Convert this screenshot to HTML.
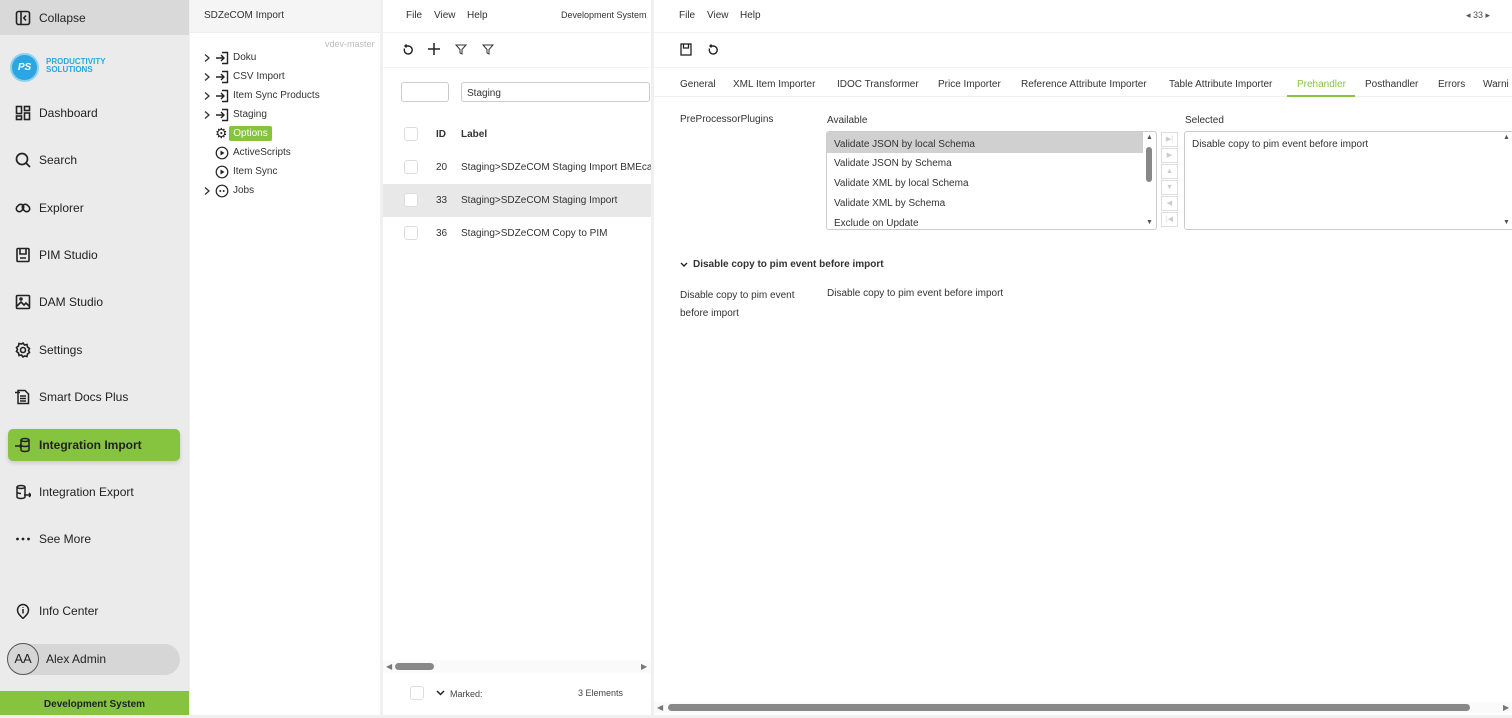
<!DOCTYPE html>
<html><head><meta charset="utf-8"><style>
*{box-sizing:border-box;margin:0;padding:0}
body{width:1512px;height:715px;overflow:hidden;background:#f0f0f0;font-family:"Liberation Sans",sans-serif;color:#333;position:relative}
.a{position:absolute;white-space:nowrap}
.sb{left:0;top:0;width:189px;height:715px;background:#ebebeb}
.nav{position:absolute;left:15px;font-size:12px;color:#222;display:flex;align-items:center;gap:8px}
.nav svg{width:16px;height:16px}
.t{font-size:10px;color:#333}
</style></head><body>
<svg width="0" height="0" style="position:absolute"><defs>
<symbol id="chev" viewBox="0 0 8 10"><path d="M2 1.5 6 5 2 8.5" fill="none" stroke="#333" stroke-width="1.3"/></symbol>
<symbol id="imp" viewBox="0 0 14 14"><path d="M1 7h8M6 4l3 3-3 3M7 1.5h5.5v11H7" fill="none" stroke="#222" stroke-width="1.4"/></symbol>
<symbol id="play" viewBox="0 0 14 14"><circle cx="7" cy="7" r="5.8" fill="none" stroke="#222" stroke-width="1.2"/><path d="M5.5 4.5v5l4-2.5z" fill="#222"/></symbol>
<symbol id="jobs" viewBox="0 0 14 14"><circle cx="7" cy="7" r="5.8" fill="none" stroke="#222" stroke-width="1.2"/><circle cx="5.3" cy="7" r="1" fill="#222"/><circle cx="8.7" cy="7" r="1" fill="#222"/></symbol>
</defs></svg>
<!-- sidebar -->
<div class="a sb"></div>
<div class="a" style="left:0;top:0;width:189px;height:35px;background:#d9d9d9"></div>
<div class="nav" style="top:10px"><svg viewBox="0 0 16 16" fill="none" stroke="#222" stroke-width="1.6"><rect x="1.5" y="1.5" width="13" height="13" rx="2"/><path d="M6 2v12M11 5.5 8.8 8 11 10.5"/></svg>Collapse</div>
<div class="a" style="left:10px;top:53px;width:29px;height:29px;border-radius:50%;background:#2ba6e0;border:2px solid #8fd0f0;color:#fff;font-size:10px;font-style:italic;font-weight:bold;text-align:center;line-height:25px">PS</div>
<div class="a" style="left:46px;top:58px;font-size:8px;font-weight:bold;color:#2ba6e0;line-height:8px">PRODUCTIVITY<br>SOLUTIONS</div>
<div class="nav" style="top:105px"><svg viewBox="0 0 16 16" fill="none" stroke="#222" stroke-width="1.6"><rect x="1.5" y="1.5" width="5" height="7"/><rect x="9.5" y="1.5" width="5" height="4"/><rect x="1.5" y="11" width="5" height="3.5"/><rect x="9.5" y="8" width="5" height="6.5"/></svg>Dashboard</div>
<div class="nav" style="top:152px"><svg viewBox="0 0 16 16" fill="none" stroke="#222" stroke-width="1.7"><circle cx="7" cy="7" r="5.5"/><path d="M11 11l4 4"/></svg>Search</div>
<div class="nav" style="top:200px"><svg viewBox="0 0 16 16" fill="none" stroke="#222" stroke-width="1.6"><rect x="1" y="5" width="8" height="6" rx="3" transform="rotate(-45 5 8)"/><rect x="7" y="5" width="8" height="6" rx="3" transform="rotate(45 11 8)"/></svg>Explorer</div>
<div class="nav" style="top:247px"><svg viewBox="0 0 16 16" fill="none" stroke="#222" stroke-width="1.6"><rect x="2" y="1.5" width="12" height="13" rx="1"/><path d="M5 2v5h6V2M5 11h6"/></svg>PIM Studio</div>
<div class="nav" style="top:294px"><svg viewBox="0 0 16 16" fill="none" stroke="#222" stroke-width="1.6"><rect x="1.5" y="1.5" width="13" height="13" rx="1"/><path d="M2 12l4-4 3 3 2-2 3 3"/><circle cx="6" cy="5" r="1"/></svg>DAM Studio</div>
<div class="nav" style="top:342px"><svg viewBox="0 0 16 16" fill="none" stroke="#222" stroke-width="1.6"><circle cx="8" cy="8" r="2.5"/><path d="M8 1l1.5 2 2.5-.5.5 2.5 2 1.5-1 2 1 2-2 1.5-.5 2.5-2.5-.5L8 15l-1.5-2-2.5.5-.5-2.5-2-1.5 1-2-1-2 2-1.5.5-2.5 2.5.5z"/></svg>Settings</div>
<div class="nav" style="top:389px"><svg viewBox="0 0 16 16" fill="none" stroke="#222" stroke-width="1.5"><path d="M3 1.5h7l3.5 3.5v9.5H3zM5 7h6M5 9.5h6M5 12h6M0 3.5h5"/></svg>Smart Docs Plus</div>
<div class="a" style="left:8px;top:429px;width:172px;height:32px;background:#86c440;border-radius:5px;box-shadow:0 2px 4px rgba(0,0,0,.15)"></div>
<div class="nav" style="top:437px;font-weight:bold"><svg viewBox="0 0 16 16" fill="none" stroke="#222" stroke-width="1.5"><ellipse cx="10" cy="3" rx="4" ry="1.5"/><path d="M6 3v10c0 .8 1.8 1.5 4 1.5s4-.7 4-1.5V3M6 8c0 .8 1.8 1.5 4 1.5s4-.7 4-1.5M0 9h7M5 7l2 2-2 2"/></svg>Integration Import</div>
<div class="nav" style="top:484px"><svg viewBox="0 0 16 16" fill="none" stroke="#222" stroke-width="1.5"><ellipse cx="6" cy="3" rx="4" ry="1.5"/><path d="M2 3v10c0 .8 1.8 1.5 4 1.5s4-.7 4-1.5V3M2 8c0 .8 1.8 1.5 4 1.5M9 11h7M14 9l2 2-2 2"/></svg>Integration Export</div>
<div class="nav" style="top:531px"><svg viewBox="0 0 16 16" fill="#222"><circle cx="2.5" cy="8" r="1.4"/><circle cx="8" cy="8" r="1.4"/><circle cx="13.5" cy="8" r="1.4"/></svg>See More</div>
<div class="nav" style="top:603px"><svg viewBox="0 0 16 16" fill="none" stroke="#222" stroke-width="1.5"><path d="M8 15.5C5 12.5 2.5 10.5 2.5 7a5.5 5.5 0 0 1 11 0c0 3.5-2.5 5.5-5.5 8.5z"/><path d="M8 6v4.5M8 4v.8"/></svg>Info Center</div>
<div class="a" style="left:7px;top:644px;width:173px;height:31px;background:#d6d6d6;border-radius:16px"></div>
<div class="a" style="left:7px;top:643px;width:32px;height:32px;border-radius:50%;border:1px solid #555;font-size:13px;text-align:center;line-height:30px;color:#222">AA</div>
<div class="a" style="left:46px;top:652px;font-size:12px;color:#222">Alex Admin</div>
<div class="a" style="left:0;top:691px;width:189px;height:24px;background:#86c440;font-size:10px;font-weight:bold;text-align:center;line-height:27px;color:#222">Development System</div>

<!-- tree panel -->
<div class="a" style="left:190px;top:0;width:190px;height:715px;background:#fff"></div>
<div class="a" style="left:190px;top:0;width:190px;height:33px;background:#f5f5f5;border-bottom:1px solid #eee"></div>
<div class="a t" style="left:204px;top:10px">SDZeCOM Import</div>
<div class="a" style="left:325px;top:39px;font-size:9px;color:#bbb">vdev-master</div>
<svg class="a" style="left:203px;top:53px" width="8" height="10"><use href="#chev"/></svg><svg class="a" style="left:215px;top:51px" width="14" height="14"><use href="#imp"/></svg><div class="a t" style="left:233px;top:52px">Doku</div>
<svg class="a" style="left:203px;top:72px" width="8" height="10"><use href="#chev"/></svg><svg class="a" style="left:215px;top:70px" width="14" height="14"><use href="#imp"/></svg><div class="a t" style="left:233px;top:71px">CSV Import</div>
<svg class="a" style="left:203px;top:91px" width="8" height="10"><use href="#chev"/></svg><svg class="a" style="left:215px;top:89px" width="14" height="14"><use href="#imp"/></svg><div class="a t" style="left:233px;top:90px">Item Sync Products</div>
<svg class="a" style="left:203px;top:110px" width="8" height="10"><use href="#chev"/></svg><svg class="a" style="left:215px;top:108px" width="14" height="14"><use href="#imp"/></svg><div class="a t" style="left:233px;top:109px">Staging</div>
<div class="a" style="left:215px;top:125px;font-size:14px;color:#222">⚙</div>
<div class="a" style="left:229px;top:126px;width:43px;height:15px;background:#86c440;border-radius:2px;font-size:10px;color:#fff;text-align:center;line-height:15px">Options</div>
<svg class="a" style="left:215px;top:146px" width="14" height="14"><use href="#play"/></svg><div class="a t" style="left:233px;top:147px">ActiveScripts</div>
<svg class="a" style="left:215px;top:165px" width="14" height="14"><use href="#play"/></svg><div class="a t" style="left:233px;top:166px">Item Sync</div>
<svg class="a" style="left:203px;top:186px" width="8" height="10"><use href="#chev"/></svg><svg class="a" style="left:215px;top:184px" width="14" height="14"><use href="#jobs"/></svg><div class="a t" style="left:233px;top:185px">Jobs</div>

<!-- list panel -->
<div class="a" style="left:383px;top:0;width:268px;height:715px;background:#fff"></div>
<div class="a" style="left:383px;top:32px;width:268px;height:1px;background:#f3f3f3"></div>
<div class="a" style="left:383px;top:67px;width:268px;height:1px;background:#f3f3f3"></div>
<div class="a t" style="left:406px;top:10px">File</div>
<div class="a t" style="left:434px;top:10px">View</div>
<div class="a t" style="left:467px;top:10px">Help</div>
<div class="a" style="left:561px;top:10px;font-size:9px;color:#333">Development System</div>
<svg class="a" style="left:402px;top:44px" width="12" height="12" viewBox="0 0 12 12" fill="none" stroke="#222" stroke-width="1.4"><path d="M2.5 4.5A4 4 0 1 0 6 2H3.5M4.5 0.5 3 2l1.5 1.5"/></svg>
<svg class="a" style="left:428px;top:43px" width="12" height="12" viewBox="0 0 12 12" stroke="#222" stroke-width="1.5"><path d="M6 0v12M0 6h12"/></svg>
<svg class="a" style="left:455px;top:44px" width="12" height="11" viewBox="0 0 12 11" fill="none" stroke="#333"><path d="M1 1h10L7 5.5V10L5 9V5.5z"/></svg>
<svg class="a" style="left:482px;top:44px" width="12" height="11" viewBox="0 0 12 11" fill="none" stroke="#333"><path d="M1 1h10L7 5.5V10L5 9V5.5z"/></svg>
<div class="a" style="left:401px;top:82px;width:48px;height:20px;border:1px solid #ccc;border-radius:3px"></div>
<div class="a" style="left:461px;top:82px;width:189px;height:20px;border:1px solid #ccc;border-radius:3px;font-size:10px;padding:5px 5px;color:#333">Staging</div>
<div class="a" style="left:404px;top:127px;width:14px;height:14px;border:1px solid #ddd;border-radius:3px"></div>
<div class="a t" style="left:436px;top:129px;font-weight:bold">ID</div>
<div class="a t" style="left:461px;top:129px;font-weight:bold">Label</div>
<div class="a" style="left:404px;top:160px;width:14px;height:14px;border:1px solid #ddd;border-radius:3px"></div>
<div class="a t" style="left:436px;top:162px">20</div>
<div class="a" style="left:461px;top:162px;width:190px;overflow:hidden;font-size:10px">Staging&gt;SDZeCOM Staging Import BMEcat</div>
<div class="a" style="left:383px;top:184px;width:268px;height:33px;background:#e8e8e8"></div>
<div class="a" style="left:404px;top:193px;width:14px;height:14px;border:1px solid #ddd;border-radius:3px;background:#fff"></div>
<div class="a t" style="left:436px;top:195px">33</div>
<div class="a t" style="left:461px;top:195px">Staging&gt;SDZeCOM Staging Import</div>
<div class="a" style="left:404px;top:226px;width:14px;height:14px;border:1px solid #ddd;border-radius:3px"></div>
<div class="a t" style="left:436px;top:228px">36</div>
<div class="a t" style="left:461px;top:228px">Staging&gt;SDZeCOM Copy to PIM</div>
<div class="a" style="left:383px;top:660px;width:268px;height:13px;background:#fafafa"></div>
<div class="a" style="left:386px;top:662px;font-size:8px;color:#777">◀</div>
<div class="a" style="left:641px;top:662px;font-size:8px;color:#777">▶</div>
<div class="a" style="left:395px;top:663px;width:39px;height:7px;background:#888;border-radius:4px"></div>
<div class="a" style="left:410px;top:686px;width:14px;height:14px;border:1px solid #ddd;border-radius:3px"></div>
<svg class="a" style="left:436px;top:690px" width="9" height="6" viewBox="0 0 9 6" fill="none" stroke="#222" stroke-width="1.5"><path d="M1 1l3.5 3.5L8 1"/></svg>
<div class="a" style="left:450px;top:689px;font-size:9px;color:#444">Marked:</div>
<div class="a" style="left:578px;top:688px;font-size:9px;color:#444">3 Elements</div>

<!-- main panel -->
<div class="a" style="left:654px;top:0;width:858px;height:715px;background:#fff"></div>
<div class="a" style="left:654px;top:32px;width:858px;height:1px;background:#f3f3f3"></div>
<div class="a" style="left:654px;top:67px;width:858px;height:1px;background:#f3f3f3"></div>
<div class="a" style="left:654px;top:96px;width:858px;height:1px;background:#eee"></div>
<div class="a t" style="left:679px;top:10px">File</div>
<div class="a t" style="left:707px;top:10px">View</div>
<div class="a t" style="left:740px;top:10px">Help</div>
<div class="a" style="left:1466px;top:10px;font-size:9px;color:#555">◂ 33 ▸</div>
<svg class="a" style="left:680px;top:43px" width="12" height="13" viewBox="0 0 12 13" fill="none" stroke="#222" stroke-width="1.3"><rect x="1" y="1" width="10" height="11"/><path d="M3.5 1v4h5V1"/></svg>
<svg class="a" style="left:707px;top:44px" width="12" height="12" viewBox="0 0 12 12" fill="none" stroke="#222" stroke-width="1.4"><path d="M2.5 4.5A4 4 0 1 0 6 2H3.5M4.5 0.5 3 2l1.5 1.5"/></svg>
<div class="a t" style="left:680px;top:79px">General</div>
<div class="a t" style="left:733px;top:79px">XML Item Importer</div>
<div class="a t" style="left:837px;top:79px">IDOC Transformer</div>
<div class="a t" style="left:938px;top:79px">Price Importer</div>
<div class="a t" style="left:1021px;top:79px">Reference Attribute Importer</div>
<div class="a t" style="left:1169px;top:79px">Table Attribute Importer</div>
<div class="a t" style="left:1297px;top:79px;color:#86c440">Prehandler</div>
<div class="a" style="left:1287px;top:95px;width:68px;height:2px;background:#86c440"></div>
<div class="a t" style="left:1365px;top:79px">Posthandler</div>
<div class="a t" style="left:1438px;top:79px">Errors</div>
<div class="a t" style="left:1483px;top:79px">Warni</div>
<div class="a t" style="left:680px;top:114px">PreProcessorPlugins</div>
<div class="a t" style="left:827px;top:115px">Available</div>
<div class="a t" style="left:1185px;top:115px">Selected</div>
<div class="a" style="left:826px;top:131px;width:331px;height:99px;border:1px solid #ccc;border-radius:3px;overflow:hidden">
 <div style="height:21px;background:#d0d0d0;width:316px"></div>
</div>
<div class="a t" style="left:834px;top:139px">Validate JSON by local Schema</div>
<div class="a t" style="left:834px;top:158px">Validate JSON by Schema</div>
<div class="a t" style="left:834px;top:178px">Validate XML by local Schema</div>
<div class="a t" style="left:834px;top:198px">Validate XML by Schema</div>
<div class="a t" style="left:834px;top:218px">Exclude on Update</div>
<div class="a" style="left:1146px;top:134px;font-size:7px;color:#555">▲</div>
<div class="a" style="left:1146px;top:219px;font-size:7px;color:#555">▼</div>
<div class="a" style="left:1146px;top:147px;width:6px;height:35px;background:#888;border-radius:3px"></div>
<div class="a" style="left:1161px;top:132px;width:17px;height:98px;display:flex;flex-direction:column;gap:1px">
 <div style="height:15px;border:1px solid #ddd;font-size:7px;color:#ccc;text-align:center;line-height:13px">▶|</div>
 <div style="height:15px;border:1px solid #ddd;font-size:7px;color:#ccc;text-align:center;line-height:13px">▶</div>
 <div style="height:15px;border:1px solid #ddd;font-size:7px;color:#ccc;text-align:center;line-height:13px">▲</div>
 <div style="height:15px;border:1px solid #ddd;font-size:7px;color:#ccc;text-align:center;line-height:13px">▼</div>
 <div style="height:15px;border:1px solid #ddd;font-size:7px;color:#ccc;text-align:center;line-height:13px">◀</div>
 <div style="height:15px;border:1px solid #ddd;font-size:7px;color:#ccc;text-align:center;line-height:13px">|◀</div>
</div>
<div class="a" style="left:1184px;top:131px;width:340px;height:99px;border:1px solid #ccc;border-radius:3px"></div>
<div class="a t" style="left:1192px;top:139px">Disable copy to pim event before import</div>
<div class="a" style="left:1503px;top:134px;font-size:7px;color:#555">▲</div>
<div class="a" style="left:1503px;top:219px;font-size:7px;color:#555">▼</div>
<svg class="a" style="left:680px;top:262px" width="8" height="6" viewBox="0 0 8 6" fill="none" stroke="#222" stroke-width="1.4"><path d="M1 1l3 3 3-3"/></svg>
<div class="a t" style="left:693px;top:259px;font-weight:bold">Disable copy to pim event before import</div>
<div class="a t" style="left:680px;top:287px;line-height:18px">Disable copy to pim event<br>before import</div>
<div class="a t" style="left:827px;top:288px">Disable copy to pim event before import</div>
<div class="a" style="left:654px;top:702px;width:858px;height:11px;background:#fafafa"></div>
<div class="a" style="left:657px;top:703px;font-size:8px;color:#777">◀</div>
<div class="a" style="left:1503px;top:703px;font-size:8px;color:#777">▶</div>
<div class="a" style="left:668px;top:704px;width:802px;height:7px;background:#888;border-radius:4px"></div>
</body></html>
